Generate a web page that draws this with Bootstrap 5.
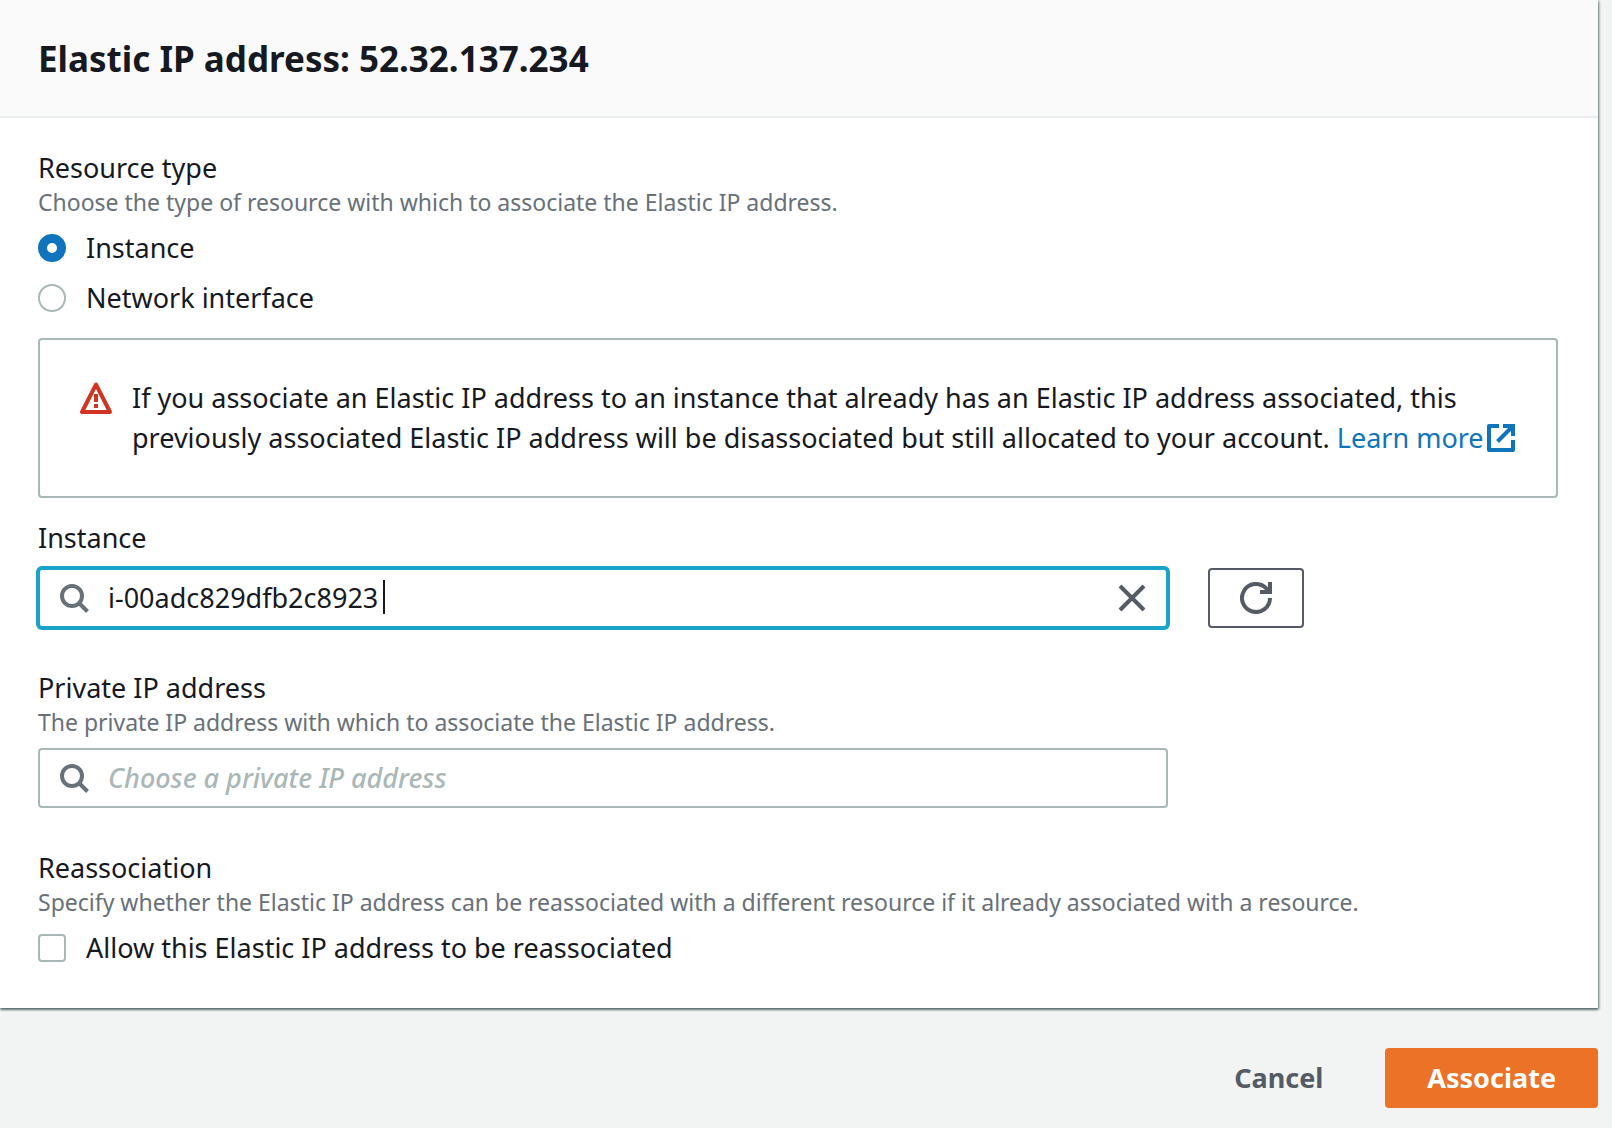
<!DOCTYPE html>
<html lang="en">
<head>
<meta charset="utf-8">
<meta name="viewport" content="width=device-width, initial-scale=1">
<title>Associate Elastic IP address</title>
<link href="https://cdn.jsdelivr.net/npm/bootstrap@5.3.0/dist/css/bootstrap.min.css" rel="stylesheet">
<style>
  body { background: #f2f3f3; color: #16191f; font-family: "Noto Sans", "Open Sans", sans-serif; font-size: 27px; line-height: 40px; }
  .panel { margin-right: 14px; background: #fff; box-shadow: 0 2px 2px 0 rgba(0,28,36,.5), 2px 2px 2px 0 rgba(0,28,36,.15), 1px 0 2px 0 rgba(0,28,36,.25); }
  .panel-head { background: #fafafa; border-bottom: 2px solid #eaeded; padding: 35px 40px 33px 38px; }
  .panel-head h1 { font-size: 35px; line-height: 48px; font-weight: 700; }
  .panel-main { padding: 32px 40px 40px 38px; }
  .field-label { display: block; font-size: 27px; line-height: 36px; margin: 0; float: none; }
  .field-hint { font-size: 23px; line-height: 32px; color: #687078; margin: 0 0 10px; }
  .field-gap { margin-top: 42px; }
  .choice { display: flex; align-items: center; gap: 20px; margin: 0; padding: 0; min-height: 40px; }
  .choice + .choice { margin-top: 10px; }
  .choice .form-check-input { float: none; flex: none; width: 28px; height: 28px; margin: 0; border: 2px solid #aab7b8; }
  .choice .form-check-input[type=checkbox] { border-radius: 4px; }
  .choice .form-check-input[type=radio]:checked { border: 9px solid #0f74bb; background: #fff; }
  .notice { margin: 20px 0 22px; padding: 38px 38px 38px 40px; gap: 20px; border: 2px solid #aab7b8; border-radius: 4px; background: #fff; color: inherit; }
  .notice > svg { margin-top: 4px; }
  .notice a { color: #0f74bb; text-decoration: none; font-weight: 400; }
  .link-glyph { margin-left: 3px; vertical-align: -4px; }
  .search-box { display: flex; align-items: center; height: 60px; padding: 0 18px; border: 2px solid #aab7b8; border-radius: 4px; background: #fff; }
  .search-box.active { border-color: #1aa3c9; box-shadow: 0 0 0 2px #1aa3c9; }
  .search-box .form-control { flex: 1; min-width: 0; margin-left: 18px; padding: 0; border: 0; border-radius: 0; box-shadow: none; background: none; color: #16191f; font-size: 27px; line-height: 40px; caret-color: transparent; }
  .search-box .form-control::placeholder { color: #aab7b8; font-style: italic; font-weight: 500; opacity: 1; }
  .text-caret { position: absolute; left: 343px; top: 10px; width: 2px; height: 34px; background: #16191f; }
  .btn-plain { border: 0; padding: 0; background: none; line-height: 0; }
  .btn-refresh { width: 96px; height: 60px; padding: 0; border: 2px solid #545b64; border-radius: 4px; background: #fff; line-height: 0; }
  .actions { padding: 40px 14px 20px; gap: 20px; }
  .actions .btn { height: 60px; padding: 0 42px; border: 0; border-radius: 4px; font-size: 27px; line-height: 40px; font-weight: 700; color: #545b64; }
  .actions .btn-go { background: #eb7226; color: #fff; }
  .wide-gutter { --bs-gutter-x: 40px; margin-top: 12px; }
</style>
</head>
<body>
<form>
  <section class="panel">
    <header class="panel-head"><h1 class="m-0">Elastic IP address: 52.32.137.234</h1></header>
    <div class="panel-main">
      <fieldset>
        <legend class="field-label">Resource type</legend>
        <p class="field-hint">Choose the type of resource with which to associate the Elastic IP address.</p>
        <div class="form-check choice">
          <input class="form-check-input" type="radio" name="rtype" id="r1" checked>
          <label for="r1">Instance</label>
        </div>
        <div class="form-check choice">
          <input class="form-check-input" type="radio" name="rtype" id="r2">
          <label for="r2">Network interface</label>
        </div>
      </fieldset>

      <div class="alert notice d-flex align-items-start" role="alert">
        <svg class="flex-shrink-0" width="32" height="32" viewBox="0 0 32 32" fill="none" aria-hidden="true">
          <path d="M16 2.500 2 30H30Z" stroke="#d13522" stroke-width="4" stroke-linejoin="round"/>
          <path d="M16 12v8M16 22v4" stroke="#d13522" stroke-width="4"/>
        </svg>
        <div>If you associate an Elastic IP address to an instance that already has an Elastic IP address associated, this previously associated Elastic IP address will be disassociated but still allocated to your account. <a href="#" class="text-nowrap">Learn more<svg class="link-glyph" width="28" height="28" viewBox="0 0 28 28" fill="none" stroke="#0f74bb" stroke-width="4" aria-hidden="true"><path d="M12 2H2V26H26V16" stroke-linejoin="round"/><path d="M16 2H26V12M26 2 10.500 17.500"/></svg></a></div>
      </div>

      <label class="field-label" for="inst">Instance</label>
      <div class="row wide-gutter">
        <div class="col-9">
          <div class="search-box active position-relative">
            <svg width="32" height="32" viewBox="0 0 32 32" fill="none" stroke="#687078" stroke-width="4" aria-hidden="true"><circle cx="14" cy="14" r="10"/><path d="M21 21l8.500 8.500"/></svg>
            <input class="form-control" id="inst" type="text" value="i-00adc829dfb2c8923">
            <span class="text-caret" aria-hidden="true"></span>
            <button type="button" class="btn-plain" aria-label="Clear"><svg width="32" height="32" viewBox="0 0 32 32" fill="none" stroke="#545b64" stroke-width="4" aria-hidden="true"><path d="M4 4 28 28M28 4 4 28"/></svg></button>
          </div>
        </div>
        <div class="col-3">
          <button type="button" class="btn btn-refresh" aria-label="Refresh"><svg width="32" height="32" viewBox="0 0 32 32" fill="none" stroke="#545b64" stroke-width="4" aria-hidden="true"><path d="M30 16A14 14 0 1 1 26 6.200L28 9"/><path d="M30 0V10H20"/></svg></button>
        </div>
      </div>

      <label class="field-label field-gap" for="pip">Private IP address</label>
      <p class="field-hint">The private IP address with which to associate the Elastic IP address.</p>
      <div class="row wide-gutter mt-0">
        <div class="col-9">
          <div class="search-box">
            <svg width="32" height="32" viewBox="0 0 32 32" fill="none" stroke="#687078" stroke-width="4" aria-hidden="true"><circle cx="14" cy="14" r="10"/><path d="M21 21l8.500 8.500"/></svg>
            <input class="form-control" id="pip" type="text" placeholder="Choose a private IP address">
          </div>
        </div>
      </div>

      <fieldset class="field-gap">
        <legend class="field-label">Reassociation</legend>
        <p class="field-hint">Specify whether the Elastic IP address can be reassociated with a different resource if it already associated with a resource.</p>
        <div class="form-check choice">
          <input class="form-check-input" type="checkbox" id="re">
          <label for="re">Allow this Elastic IP address to be reassociated</label>
        </div>
      </fieldset>
    </div>
  </section>
  <div class="actions d-flex justify-content-end">
    <button type="button" class="btn">Cancel</button>
    <button type="submit" class="btn btn-go">Associate</button>
  </div>
</form>
<script src="https://cdn.jsdelivr.net/npm/bootstrap@5.3.0/dist/js/bootstrap.bundle.min.js"></script>
</body>
</html>
